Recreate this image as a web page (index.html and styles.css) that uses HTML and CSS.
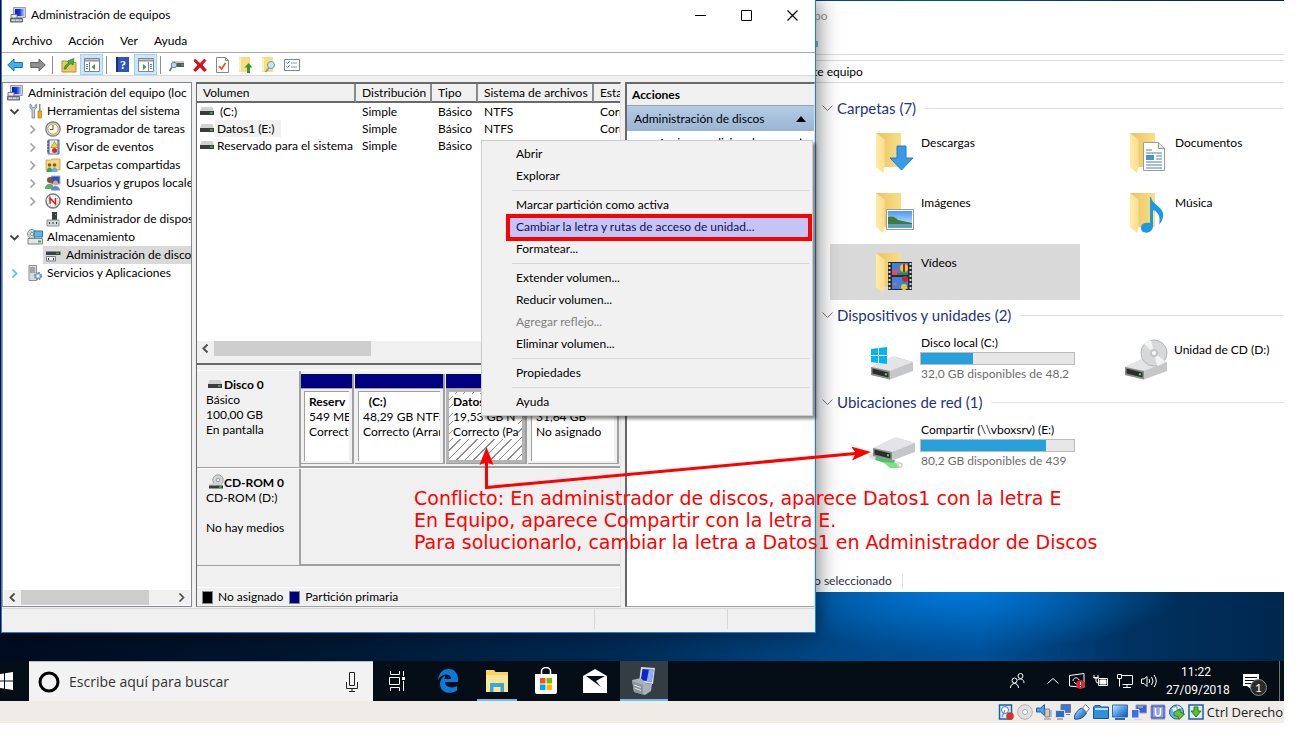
FILE: index.html
```html
<!DOCTYPE html>
<html lang="es">
<head>
<meta charset="utf-8">
<title>Administración de equipos</title>
<link rel="stylesheet" href="styles.css">
</head>
<body>
<svg class="defs" aria-hidden="true">
  <defs>
    <linearGradient id="g-fold" x1="0" x2="1" y1="0" y2="0"><stop offset="0" stop-color="#e9c463"/><stop offset="1" stop-color="#fadd85"/></linearGradient>
    <linearGradient id="g-flap" x1="0" x2="1" y1="0" y2="0"><stop offset="0" stop-color="#ffeaa8"/><stop offset="1" stop-color="#fddf8c"/></linearGradient>
    <linearGradient id="g-blue" x1="0" x2="1" y1="0" y2="1"><stop offset="0" stop-color="#cfe9ff"/><stop offset="0.5" stop-color="#4f9be6"/><stop offset="1" stop-color="#0d4fae"/></linearGradient>
    <linearGradient id="g-sky" x1="0" x2="0" y1="0" y2="1"><stop offset="0" stop-color="#4a9bf0"/><stop offset="1" stop-color="#d8eefc"/></linearGradient>
    <linearGradient id="g-screen" x1="0" x2="1" y1="0" y2="0"><stop offset="0" stop-color="#0b1fc0"/><stop offset="0.5" stop-color="#1b35d6"/><stop offset="1" stop-color="#a9c4f6"/></linearGradient>
    <symbol id="i-pc" viewBox="0 0 16 16"><path d="M3.500.500h12v10h-12z" fill="#cfd3d8" stroke="#9a9fa5"/><path d="M5 2h9v7H5z" fill="url(#g-screen)"/><path d="M1 7.500h6V11H1z" fill="#e6e9ec" stroke="#767c82"/><path d="M.5 11.500h12v3.500H.5z" fill="#9aa3ad" stroke="#5d656d"/><path d="M2 13.200h3M6 13.200h3M10 13.200h1.500" stroke="#eef1f4"/></symbol>
    <symbol id="i-tools" viewBox="0 0 16 16"><path d="M3 1v4l2 1.500V15h2.500V6.500L9.500 5V1L8 2.200v2.300H4.800V2.200z" fill="#c7cbd0" stroke="#81868c" stroke-width=".8"/><path d="M12 1h1.500v7H12z" fill="#8b9096"/><path d="M11 8h3.500v7H11z" fill="#f2a81d" stroke="#bd7a05" stroke-width=".7"/></symbol>
    <symbol id="i-clock" viewBox="0 0 16 16"><circle cx="8" cy="8" r="7.200" fill="#dcdcdc" stroke="#767676" stroke-width="1.200"/><circle cx="8" cy="8" r="5.200" fill="#fff8e0" stroke="#b7a06c"/><path d="M8 4v4.500h-3" stroke="#555" fill="none"/></symbol>
    <symbol id="i-event" viewBox="0 0 16 16"><path d="M3 1h11v14H3z" fill="#8fa6d6" stroke="#51689e"/><path d="M5 1.500h7v13H5z" fill="#e8eef8"/><path d="M9.500 2.500l3.500 6H6z" fill="#ffcf2e" stroke="#b88900" stroke-width=".7"/><circle cx="9.500" cy="11.500" r="2.500" fill="#cf2a27"/><path d="M2 3h2M2 6h2M2 9h2M2 12h2" stroke="#444"/></symbol>
    <symbol id="i-shared" viewBox="0 0 16 16"><path d="M1 3h5l1-1h8v11H1z" fill="#f5d77c" stroke="#c69f3c" stroke-width=".8"/><circle cx="4.500" cy="8" r="1.800" fill="#8b5a2b"/><circle cx="9.500" cy="8" r="1.800" fill="#8b5a2b"/><path d="M1.500 15c0-6 6-6 6 0z" fill="#35a06d"/><path d="M6.500 15c0-6 6-6 6 0z" fill="#58b7de"/></symbol>
    <symbol id="i-users" viewBox="0 0 16 16"><path d="M6 1h9v8H6z" fill="#2b50cf" stroke="#aeb5c2"/><circle cx="5" cy="5" r="3" fill="#7a573a"/><path d="M0 14c0-7 9-7 9 0z" fill="#68a96a"/><circle cx="10.500" cy="8" r="2.500" fill="#d5a982"/><path d="M6 15.500c0-6 9-6 9 0z" fill="#5a8bd0"/></symbol>
    <symbol id="i-perf" viewBox="0 0 16 16"><circle cx="8" cy="8" r="7" fill="#fff" stroke="#7b7b7b" stroke-width="1.500"/><circle cx="8" cy="8" r="5" fill="none" stroke="#999" stroke-dasharray="1 1.500"/><path d="M5 11V5l5.500 6V5" stroke="#d2201f" stroke-width="1.500" fill="none"/></symbol>
    <symbol id="i-dev" viewBox="0 0 16 16"><path d="M7 1h5v8H7z" fill="#3b3f43"/><path d="M10 3h1v1h-1z" fill="#3ae04d"/><path d="M2 9h12v6H2z" fill="#d5d8db" stroke="#8b9095"/><path d="M4.500 11v2M8 11v2M11.500 11v2" stroke="#333"/></symbol>
    <symbol id="i-storage" viewBox="0 0 16 16"><circle cx="5" cy="5" r="4.500" fill="#d0d3d5" stroke="#8f9496"/><circle cx="5" cy="5" r="1.500" fill="#fff" stroke="#888"/><path d="M7 2h8.500v6H7z" fill="#59b4e8" stroke="#39719a"/><path d="M1 9.500h14.500V15H1z" fill="#e3e5e7" stroke="#7d8286"/><path d="M11 11.500h3v2h-3z" fill="#32b53a"/></symbol>
    <symbol id="i-disk" viewBox="0 0 16 16"><path d="M1 2h14.500v2.500H1z" fill="#dcdedf"/><path d="M1 4.500h14.500V8H1z" fill="#3d4145"/><path d="M11 6.300h3" stroke="#38dc45"/><path d="M1.500 9.500h9V14h-9z" fill="#eceeef" stroke="#777c80"/><path d="M3.500 11v2M8.500 11v2" stroke="#333"/></symbol>
    <symbol id="i-serv" viewBox="0 0 16 16"><path d="M2 .5h7.500v15H2z" fill="#d8dbdd" stroke="#8d9296"/><path d="M3 3h5M3 5h5M3 7h5" stroke="#6b7074"/><circle cx="11" cy="11" r="3.200" fill="#dce9f3" stroke="#6f93b0" stroke-width="2" stroke-dasharray="1.600 .9"/><circle cx="11" cy="11" r="2.800" fill="#b5cfe2" stroke="#6f93b0"/><circle cx="11" cy="11" r="1" fill="#fff"/></symbol>
    <symbol id="i-vol" viewBox="0 0 14 9"><path d="M1.500 0h11l1.500 4H0z" fill="#cfd1d3"/><path d="M0 4h14v4H0z" fill="#3a3d40"/><path d="M10 6h2.500" stroke="#37e044" stroke-width="1.400"/></symbol>
    <symbol id="i-cdrom" viewBox="0 0 16 16"><circle cx="10" cy="6" r="5.200" fill="#d4d7d8" stroke="#9a9ea0"/><circle cx="10" cy="6" r="1.800" fill="#f7f7f7" stroke="#999"/><path d="M2 9.500h12l1 2H1z" fill="#cfd1d3"/><path d="M1 11.500h14v3H1z" fill="#3a3d40"/><path d="M11 13h2.500" stroke="#37e044" stroke-width="1.300"/></symbol>
    <symbol id="i-exp" viewBox="0 0 9 9"><path d="M2.500.5l4 4-4 4" fill="none" stroke="currentColor" stroke-width="1.700"/></symbol>
    <symbol id="i-col" viewBox="0 0 9 9"><path d="M.5 2.500l4 4 4-4" fill="none" stroke="currentColor" stroke-width="1.800"/></symbol>
    <symbol id="i-left" viewBox="0 0 9 9"><path d="M6.500.5l-4 4 4 4" fill="none" stroke="currentColor" stroke-width="2"/></symbol>
    <symbol id="i-folder" viewBox="0 0 44 44"><path d="M5 2h25v34H5z" fill="url(#g-fold)"/><path d="M5 2l8.500 6.500V36L12 42l-7-6z" fill="url(#g-flap)"/></symbol>
    <symbol id="i-hdd" viewBox="0 0 44 24"><path d="M1 11L22 1q2-1 4 0l17 5v9L20 23.500 1 19z" fill="#c5c6c8"/><path d="M1 11L22 1q2-1 4 0l17 5-23 9z" fill="#e4e4e6"/><path d="M1 11l19 4v8.500L1 19z" fill="#8c8d90"/><path d="M2.500 12.500l16 4v5l-16-4z" fill="#2c2d2f"/><path d="M15 18l2 .5" stroke="#3be84a" stroke-width="2"/></symbol>
  </defs>
</svg>

<main class="vm">
  <div class="desktop">

    <section class="explorer" aria-label="Este equipo">
      <div class="ex-title">po</div>
      <div class="ex-ribbon"><i></i></div>
      <div class="ex-address">te equipo</div>
      <div class="ex-body">
        <h2><svg width="11" height="7" viewBox="0 0 11 7"><path d="M.5.500l5 5 5-5" fill="none" stroke="#777"/></svg>Carpetas (7)</h2>
        <div class="ex-grid">
          <a href="#" class="tile"><svg width="44" height="44" viewBox="0 0 44 44"><use href="#i-folder"/><path d="M26 15h9v12h7L30.500 39 19 27h7z" fill="#3a9ae8" stroke="#1f7fd0"/></svg><span>Descargas</span></a>
          <a href="#" class="tile"><svg width="44" height="44" viewBox="0 0 44 44"><use href="#i-folder"/><path d="M18.500 11.500h15l6 6v22h-21z" fill="#fff" stroke="#9a9a9a"/><path d="M33.500 11.500v6h6" fill="#e4e4e4" stroke="#9a9a9a"/><path d="M21 19h6M21 22h16M31 25h6M31 28h6M21 31h16M21 34h16M21 37h16" stroke="#4a7fb5"/><path d="M21 24h8v5h-8z" fill="#4b93cf"/></svg><span>Documentos</span></a>
          <a href="#" class="tile"><svg width="44" height="44" viewBox="0 0 44 44"><use href="#i-folder"/><path d="M15.500 18.500h27v20h-27z" fill="#fff" stroke="#999"/><path d="M17 20h24v17H17z" fill="url(#g-sky)"/><path d="M17 26q6-2 10 3l14 3v2H17z" fill="#3f7a3c"/><path d="M17 33h24v4H17z" fill="#5f9fc2"/></svg><span>Imágenes</span></a>
          <a href="#" class="tile"><svg width="44" height="44" viewBox="0 0 44 44"><use href="#i-folder"/><path d="M26 6c1 8 14 10 12 20-1 5-3 6-4 8 2-9-1-13-6-15v16c0 8-12 9-12 2 0-5 5-6 9-5V6z" fill="#1d9ade"/></svg><span>Música</span></a>
          <a href="#" class="tile selected"><svg width="44" height="44" viewBox="0 0 44 44"><use href="#i-folder"/><path d="M17 11h24v28H17z" fill="#2b2b2b"/><path d="M18.500 12v27M39.500 12v27" stroke="#d6d6d6" stroke-width="2" stroke-dasharray="2 2"/><path d="M21 12h16v12H21zM21 26h16v12H21z" fill="#3f7fe0"/><path d="M21 20l6-3v7h-6z" fill="#d64f6c"/><path d="M26 22h11v2H26z" fill="#2f8b36"/><circle cx="33" cy="17" r="4" fill="#f4c61a"/><path d="M33 13v8" stroke="#a4281d" stroke-width="2"/><circle cx="34" cy="28" r="3" fill="#b9302c"/><circle cx="33" cy="36" r="3" fill="#f4c61a"/><circle cx="24" cy="33" r="1.500" fill="#e8664c"/></svg><span>Vídeos</span></a>
        </div>
        <h2><svg width="11" height="7" viewBox="0 0 11 7"><path d="M.5.500l5 5 5-5" fill="none" stroke="#777"/></svg>Dispositivos y unidades (2)</h2>
        <div class="ex-grid">
          <a href="#" class="tile drive"><svg width="44" height="44" viewBox="0 0 44 44"><use href="#i-hdd" y="18" width="44" height="24"/><path d="M1 11l7-1v7H1zM9 10l8-1v8H9zM1 18h7v7l-7-1zM9 18h8v8l-8-1z" fill="#00b6f0"/></svg><div class="info">Disco local (C:)<div class="usage" role="meter" aria-label="Espacio usado" aria-valuenow="34"><i style="width:34%"></i></div><small>32,0 GB disponibles de 48,2</small></div></a>
          <a href="#" class="tile cd"><svg width="44" height="44" viewBox="0 0 44 44"><use href="#i-hdd" y="18" width="44" height="24"/><circle cx="30" cy="15" r="13" fill="#d6d8d9" stroke="#b4b6b7"/><path d="M30 15L20 6a13 13 0 0 1 7-4zM30 15l11 8a13 13 0 0 1-8 5z" fill="#f2f4f4"/><circle cx="30" cy="15" r="4" fill="#c2c4c5"/><circle cx="30" cy="15" r="2" fill="#fff"/></svg><span>Unidad de CD (D:)</span></a>
        </div>
        <h2><svg width="11" height="7" viewBox="0 0 11 7"><path d="M.5.500l5 5 5-5" fill="none" stroke="#777"/></svg>Ubicaciones de red (1)</h2>
        <div class="ex-grid">
          <a href="#" class="tile drive"><svg width="44" height="44" viewBox="0 0 44 44"><path d="M2 31l28 9" stroke="#dfe3e3" stroke-width="6" stroke-linecap="round"/><circle cx="30" cy="40" r="2" fill="#fff" stroke="#c3c8c8"/><path d="M6 32l18 6" stroke="#4cc065" stroke-width="6"/><path d="M13 37l13 1 3 5h-9z" fill="#7fdf8c"/><use href="#i-hdd" x="2" y="12" width="44" height="24"/></svg><div class="info">Compartir (\\vboxsrv) (E:)<div class="usage" role="meter" aria-label="Espacio usado" aria-valuenow="82"><i style="width:82%"></i></div><small>80,2 GB disponibles de 439</small></div></a>
        </div>
      </div>
      <div class="ex-status"><span>o seleccionado</span></div>
    </section>

    <section class="mmc" aria-label="Administración de equipos">
      <header class="titlebar">
        <svg width="16" height="16"><use href="#i-pc"/></svg>
        <h1>Administración de equipos</h1>
        <button aria-label="Minimizar"><svg width="11" height="11"><path d="M0 5.500h11" stroke="#000"/></svg></button>
        <button aria-label="Maximizar"><svg width="11" height="11"><path d="M.5.500h10v10H.5z" fill="none" stroke="#000"/></svg></button>
        <button aria-label="Cerrar"><svg width="11" height="11"><path d="M.5.500l10 10M10.500.500l-10 10" stroke="#000" stroke-width="1.200"/></svg></button>
      </header>
      <nav class="menubar"><button>Archivo</button><button>Acción</button><button>Ver</button><button>Ayuda</button></nav>
      <div class="toolbar">
        <button aria-label="Atrás"><svg width="16" height="16"><path d="M.7 8L7 2v3.500h8.300v5H7V14z" fill="#3fb0ea" stroke="#1d6fa8"/></svg></button>
        <button aria-label="Adelante"><svg width="16" height="16"><path d="M15.300 8L9 2v3.500H.7v5H9V14z" fill="#8e9091" stroke="#626465"/></svg></button>
        <i class="tsep"></i>
        <button aria-label="Subir un nivel"><svg width="16" height="16"><path d="M1 4h5l1 1.500h8V15H1z" fill="#edc763" stroke="#b88f35"/><path d="M3 12c1-4 3-5 5-6L6.500 4 13 1.500 12 8l-2-1.500C8 8 6 9 5 12z" fill="#3fb23c" stroke="#1c7d22" stroke-width=".7"/></svg></button>
        <button class="on" aria-label="Mostrar árbol"><svg width="16" height="14"><path d="M.5.500h15v13H.5z" fill="#fff" stroke="#7d848c"/><path d="M1 2.500h14" stroke="#8f979f" stroke-width="2"/><path d="M5.500 4v9" stroke="#7d848c"/><path d="M2 6.500h2M2 8.500h2M2 10.500h2" stroke="#4b7ec1"/><path d="M11 6v6L7.500 9z" fill="#3aa535"/></svg></button>
        <i class="tsep"></i>
        <button aria-label="Ayuda"><svg width="13" height="15"><path d="M0 0h13v15H0z" fill="#2f55b8"/><path d="M0 0h2v15H0z" fill="#1a2f80"/><text x="4" y="12" fill="#fff" class="help">?</text></svg></button>
        <button class="on" aria-label="Mostrar panel de acciones"><svg width="16" height="14"><path d="M.5.500h15v13H.5z" fill="#fff" stroke="#7d848c"/><path d="M1 2.500h14" stroke="#8f979f" stroke-width="2"/><path d="M10.500 4v9" stroke="#7d848c"/><path d="M12 6.500h2M12 8.500h2M12 10.500h2" stroke="#4b7ec1"/><path d="M5 6v6l3.500-3z" fill="#3aa535"/></svg></button>
        <i class="tsep"></i>
        <button aria-label="Examinar disco"><svg width="16" height="16"><path d="M3 4h12v2H3z" fill="#c9cbcd"/><path d="M4 6h11v4H4z" fill="#55595d"/><path d="M12 8h2.500" stroke="#38dc45"/><circle cx="5" cy="8" r="2.800" fill="#b9d8ec" stroke="#70808c"/><path d="M3 10l-2.500 4" stroke="#70808c" stroke-width="1.800"/></svg></button>
        <button aria-label="Eliminar"><svg width="14" height="14"><path d="M2 1l5 4.500L11.500 1 13 2.500 9 7l4.500 5-2.500 1.500L7 9l-4.500 4.500L.5 12 5 7 1 3z" fill="#d80f16" stroke="#d80f16" stroke-width=".8"/></svg></button>
        <button aria-label="Propiedades"><svg width="13" height="16"><path d="M.5.500h9l3 3v12H.5z" fill="#fff" stroke="#828790"/><path d="M9.500.500v3h3" fill="none" stroke="#828790"/><path d="M3 9l2.500 3L9.500 6" stroke="#e4502a" stroke-width="1.700" fill="none"/></svg></button>
        <button aria-label="Carpeta arriba"><svg width="15" height="16"><path d="M1 0h11v15H1z" fill="#f9dd85"/><path d="M1 1h2v14l-2-1z" fill="#fff0b5"/><path d="M10.500 6l4 4.500H12V16H9v-5.500H6.500z" fill="#2c9e2c"/></svg></button>
        <button aria-label="Buscar"><svg width="15" height="16"><path d="M1 0h11v15H1z" fill="#f9dd85"/><path d="M1 1h2v14l-2-1z" fill="#fff0b5"/><circle cx="10" cy="8" r="3.500" fill="#c4e5f6" stroke="#7f98a6"/><path d="M8 11l-3.500 4" stroke="#7f98a6" stroke-width="1.800"/></svg></button>
        <button aria-label="Lista"><svg width="16" height="12"><path d="M.5.500h15v11H.5z" fill="#fff" stroke="#7d848c"/><path d="M2.500 3.500l1 1 2-2M2.500 7.500l1 1 2-2" fill="none" stroke="#3f7bc8"/><path d="M7 4h6M7 8h6" stroke="#8f979f"/></svg></button>
      </div>

      <div class="panes">
        <div class="pane tree-pane">
          <ul class="tree">
            <li class="l0"><svg class="ti"><use href="#i-pc"/></svg>Administración del equipo (loc</li>
            <li class="l1"><svg class="tw dark"><use href="#i-col"/></svg><svg class="ti"><use href="#i-tools"/></svg>Herramientas del sistema</li>
            <li class="l2"><svg class="tw"><use href="#i-exp"/></svg><svg class="ti"><use href="#i-clock"/></svg>Programador de tareas</li>
            <li class="l2"><svg class="tw"><use href="#i-exp"/></svg><svg class="ti"><use href="#i-event"/></svg>Visor de eventos</li>
            <li class="l2"><svg class="tw"><use href="#i-exp"/></svg><svg class="ti"><use href="#i-shared"/></svg>Carpetas compartidas</li>
            <li class="l2"><svg class="tw"><use href="#i-exp"/></svg><svg class="ti"><use href="#i-users"/></svg>Usuarios y grupos locales</li>
            <li class="l2"><svg class="tw"><use href="#i-exp"/></svg><svg class="ti"><use href="#i-perf"/></svg>Rendimiento</li>
            <li class="l2"><svg class="tw"></svg><svg class="ti"><use href="#i-dev"/></svg>Administrador de dispositivos</li>
            <li class="l1"><svg class="tw dark"><use href="#i-col"/></svg><svg class="ti"><use href="#i-storage"/></svg>Almacenamiento</li>
            <li class="l2 cur"><svg class="tw"></svg><svg class="ti"><use href="#i-disk"/></svg>Administración de discos</li>
            <li class="l1"><svg class="tw cyan"><use href="#i-exp"/></svg><svg class="ti"><use href="#i-serv"/></svg>Servicios y Aplicaciones</li>
          </ul>
          <div class="hscroll"><button aria-label="Izquierda"><svg width="9" height="9"><use href="#i-left"/></svg></button><i class="thumb tree-thumb"></i><span class="spacer"></span><button aria-label="Derecha"><svg width="9" height="9"><use href="#i-exp"/></svg></button></div>
        </div>

        <div class="pane disk-pane">
          <div class="vol-list">
            <table>
              <colgroup><col class="c1"><col class="c2"><col class="c3"><col class="c4"><col class="c5"></colgroup>
              <thead><tr><th>Volumen</th><th>Distribución</th><th>Tipo</th><th>Sistema de archivos</th><th>Estado</th></tr></thead>
              <tbody>
                <tr><td><svg class="vi"><use href="#i-vol"/></svg><span>&nbsp;(C:)</span></td><td>Simple</td><td>Básico</td><td>NTFS</td><td>Correcto</td></tr>
                <tr class="sel"><td><svg class="vi"><use href="#i-vol"/></svg><span>Datos1 (E:)</span></td><td>Simple</td><td>Básico</td><td>NTFS</td><td>Correcto</td></tr>
                <tr><td><svg class="vi"><use href="#i-vol"/></svg><span>Reservado para el sistema</span></td><td>Simple</td><td>Básico</td><td></td><td></td></tr>
              </tbody>
            </table>
          </div>
          <div class="hscroll"><button aria-label="Izquierda"><svg width="9" height="9"><use href="#i-left"/></svg></button><i class="thumb list-thumb"></i></div>
          <div class="disk-map">
            <div class="disk">
              <div class="disk-label"><b><svg class="vi"><use href="#i-vol"/></svg>Disco 0</b><span>Básico</span><span>100,00 GB</span><span>En pantalla</span></div>
              <div class="parts">
                <div class="part p1"><i></i><div class="pbox"><p><b>Reserv</b><br>549 MB<br>Correcto</p></div></div>
                <div class="part p2"><i></i><div class="pbox"><p><b>&nbsp; (C:)</b><br>48,29 GB NTFS<br>Correcto (Arranque)</p></div></div>
                <div class="part p3"><i></i><div class="pbox"><p><b>Datos1</b><br>19,53 GB NTFS<br>Correcto (Partición)</p></div></div>
                <div class="part p4 free"><i></i><div class="pbox"><p><br>31,64 GB<br>No asignado</p></div></div>
              </div>
            </div>
            <div class="disk">
              <div class="disk-label"><b><svg class="ti"><use href="#i-cdrom"/></svg>CD-ROM 0</b><span>CD-ROM (D:)</span><span>&nbsp;</span><span>No hay medios</span></div>
              <div class="parts"></div>
            </div>
          </div>
          <div class="legend"><i class="k"></i>No asignado<i class="n"></i>Partición primaria</div>
        </div>

        <div class="pane act-pane">
          <h3>Acciones</h3>
          <button class="act-head">Administración de discos<svg width="10" height="6"><path d="M0 6l5-6 5 6z"/></svg></button>
          <button class="act-more">Acciones adicionales<svg width="6" height="10"><path d="M0 0l5 5-5 5z"/></svg></button>
        </div>
      </div>
      <footer class="mmc-status"><i></i><i></i></footer>
    </section>

    <div class="ctx" role="menu">
      <button role="menuitem">Abrir</button>
      <button role="menuitem">Explorar</button>
      <hr>
      <button role="menuitem">Marcar partición como activa</button>
      <button role="menuitem" class="hot">Cambiar la letra y rutas de acceso de unidad...</button>
      <button role="menuitem">Formatear...</button>
      <hr>
      <button role="menuitem">Extender volumen...</button>
      <button role="menuitem">Reducir volumen...</button>
      <button role="menuitem" disabled>Agregar reflejo...</button>
      <button role="menuitem">Eliminar volumen...</button>
      <hr>
      <button role="menuitem">Propiedades</button>
      <hr>
      <button role="menuitem">Ayuda</button>
    </div>

    <svg class="arrows" width="400" height="50" viewBox="0 0 400 50"><path d="M11.500 12v28.500L386 6" fill="none" stroke="#f00" stroke-width="3"/><path d="M11.500 0l7 18-7-3-7 3z" fill="#f00"/><path d="M396 5l-19 8.500 4-7.500-5-6.500z" fill="#f00"/></svg>
    <p class="note">Conflicto: En administrador de discos, aparece Datos1 con la letra E<br>En Equipo, aparece Compartir con la letra E.<br>Para solucionarlo, cambiar la letra a Datos1 en Administrador de Discos</p>
  </div>

  <nav class="taskbar">
    <button class="start" aria-label="Inicio"><svg width="14" height="18"><path d="M0 2l4-.5v7H0zM5 1.300L13 0v8.500H5zM0 9.500h4v7L0 16zM5 9.500h8V18l-8-1.300z" fill="#fff"/></svg></button>
    <label class="search"><svg width="22" height="22"><circle cx="11" cy="11" r="9" fill="none" stroke="#000" stroke-width="3"/></svg><input type="text" placeholder="Escribe aquí para buscar" aria-label="Escribe aquí para buscar"><svg width="12" height="20" viewBox="0 0 12 20"><path d="M3.500.500h5v13h-5z" fill="none" stroke="#222"/><path d="M.5 10v6.500h11V10M6 16.500v3M3 19.500h6" fill="none" stroke="#222"/></svg></label>
    <div class="apps">
      <button class="tv" aria-label="Vista de tareas"><svg width="17" height="20"><path d="M1.500 0v3.500h9V0M.5 6.500h10v7H.5zM1.500 20v-3.500h9V20M14.500 0v5M14.500 10v10" fill="none" stroke="#fff"/><path d="M13 6h3v3h-3z" fill="#fff"/></svg></button>
      <button aria-label="Edge"><svg width="20" height="24" viewBox="0 0 20 24"><path d="M0 11C1 3 6 0 10.500 0 17 0 20 5 20 10v3H7c0 5 7 7 12 4v4.500C10 27 2 22 2 15c0-4 2-7 6-9-1 1-1.500 2.500-1.500 4H13c0-6-9-6-13 1z" fill="#0b7bdb"/></svg></button>
      <button class="run" aria-label="Explorador"><svg width="22" height="22" viewBox="0 0 22 22"><path d="M0 0h8l1.500 2H22v20H0z" fill="#fcd462"/><path d="M0 5h22v17H0z" fill="#ffe694"/><path d="M4 22v-9h14v9h-3.500v-5h-7v5z" fill="#33a9e0"/></svg></button>
      <button aria-label="Tienda"><svg width="24" height="28" viewBox="0 0 24 28"><path d="M7.500 8V4a4.500 3.500 0 0 1 9 0v4" fill="none" stroke="#fff" stroke-width="1.500"/><path d="M1 7h22v18q0 2-2 2H3q-2 0-2-2z" fill="#fff"/><path d="M6 11h5.500v5.500H6z" fill="#f25022"/><path d="M12.500 11H18v5.500h-5.500z" fill="#7fba00"/><path d="M6 17.500h5.500V23H6z" fill="#00a4ef"/><path d="M12.500 17.500H18V23h-5.500z" fill="#ffb900"/></svg></button>
      <button aria-label="Correo"><svg width="24" height="24" viewBox="0 0 24 24"><path d="M12 0l12 7v17H0V7z" fill="#fff"/><path d="M3 7h19l-9 5 5 6z" fill="#050d16"/></svg></button>
      <button class="run active" aria-label="Administración de equipos"><svg width="24" height="30" viewBox="0 0 24 30"><path d="M9 1l14 1-2 16-14-2z" fill="#d5dae2"/><path d="M10.500 3l11 .8-1.800 12-11-1.500z" fill="#1226c8"/><path d="M17 3.500l4.500.3-1.800 12-5-.7z" fill="#8fb0f5"/><path d="M0 14l9-2 4 5 7 1-1 7-6 4-11-3z" fill="#a9b1ba"/><path d="M0 15l11 4v9.500L2 26z" fill="#8b949e"/><path d="M2 19l7 2.500M2.500 22l6.500 2.500" stroke="#dfe4ea"/></svg></button>
    </div>
    <div class="tray">
      <svg class="people" width="15" height="16"><circle cx="10.500" cy="3" r="2.500"/><circle cx="4.500" cy="7.500" r="2.500"/><path d="M.5 15c0-6 8-6 8 0M7.500 7c3-2 6.500-1 6.500 3"/></svg>
      <svg class="up" width="12" height="8"><path d="M.5 6.500l5.500-5 5.500 5"/></svg>
      <svg width="16" height="16"><path d="M.5 2.500L15 .5v14L.5 13z"/><path d="M4 8c0-4 5-4 6-1M11 8c0 3-4 4-6 1"/><circle cx="11.500" cy="11.500" r="4" fill="#e1232b" stroke="#e1232b"/><path d="M11.500 9v3M11.500 13v1"/></svg>
      <svg width="16" height="16"><path d="M5.500 5.500h9v7h-9z"/><path d="M7 7h6v4H7z" fill="#fff"/><path d="M1 2v3h4V2M3 5v3q0 2 2 2M.5 4.500h5"/></svg>
      <svg width="16" height="16"><path d="M5 2.500h10.500v9H5.500M10 12v2.500M6 14.500h8M.5 1.500h4v4h-4zM2.500 5.500v8"/></svg>
      <svg width="17" height="16"><path d="M.5 6v4.500h2.500l3 3v-10L3 6zM8 6q1.500 2 0 4M10.500 4q3 4 0 8M13 2q4.500 6 0 12"/></svg>
      <time>11:22<br>27/09/2018</time>
      <button class="notif" aria-label="Notificaciones"><svg width="17" height="15"><path d="M0 0h16v12H8v3l-4-3H0z" fill="#fff" stroke="none"/><path d="M2 3.500h12M2 6.500h12M2 9.500h8" stroke="#050d16"/></svg><span>1</span></button>
      <i class="peek"></i>
    </div>
  </nav>

  <footer class="hostbar">
    <svg><path d="M1.500 1h12v14h-12z" fill="#d9ecff" stroke="#1c5fae" stroke-width="1.500"/><circle cx="7" cy="6" r="3.500" fill="#fff" stroke="#3a7cc8"/><path d="M7 6l-3 7" stroke="#777"/><circle cx="12" cy="12" r="3.800" fill="#d93025"/></svg>
    <svg><circle cx="8" cy="8" r="7.300" fill="#e0e0e0" stroke="#b3b3b3"/><circle cx="8" cy="8" r="2.500" fill="#fff" stroke="#aaa"/></svg>
    <svg><path d="M.5 4h4l4-3.500v11L4.500 8h-4z" fill="#4f9be6" stroke="#1c5fae"/><path d="M9 5h4.500v8H9zM8 15h7M15 6v7" fill="#ccc" stroke="#888"/></svg>
    <svg><path d="M6 .5h9.500v8H6z" fill="#3a78dc" stroke="#777"/><path d="M.5 6.500h9v7h-9z" fill="#2f6bd4" stroke="#ddd"/><path d="M2 15h6M11 10.500h4" stroke="#777"/></svg>
    <svg><path d="M.5 15c-1-4 3-9 7-11l5 5c-2 4-7 7-12 6z" fill="url(#g-blue)" stroke="#1c4f96"/><path d="M8.500 4l3-3.500 4 4-3 3.500z" fill="#fff" stroke="#777"/></svg>
    <svg><path d="M.5 14.500V3L2 1.500h5L8 3h7.500v11.500z" fill="#2f8fe0" stroke="#14549c"/><path d="M2 5h13" stroke="#b9dcfa" stroke-width="2"/></svg>
    <svg><path d="M.5 1h15v12H.5z" fill="url(#g-blue)" stroke="#2b6cb8"/><path d="M3 15h10" stroke="#2b6cb8" stroke-width="2"/></svg>
    <svg><path d="M5 1h10.500v8H5z" fill="#3a62d8" stroke="#999"/><path d="M.5 5.500H8V14H.5z" fill="#3f6fe0" stroke="#eee"/><path d="M7 3h5M3 15.500h8" stroke="#c9d6ff"/></svg>
    <svg><path d="M1.500 1.500h13v13h-13z" fill="#6f83da" stroke="#3346a6" stroke-width="2" stroke-dasharray="1 1"/><path d="M3 3h10v10H3z" fill="#93a3ea"/><path d="M5.500 4v5q0 3 2.500 3t2.500-3V4" fill="none" stroke="#fff" stroke-width="1.500"/></svg>
    <svg><circle cx="7.500" cy="8" r="7" fill="#67b0ea" stroke="#1c5fae"/><path d="M3 4l4-1 1 3-3 3zM8 1l5 3-4 1z" fill="#e9f6ff"/><path d="M5 8l6-3v3l4.500 2-5.500 5.500-1-3-4-1z" fill="#6cc332" stroke="#2f7d12"/></svg>
    <svg><path d="M1 1h14v14H1z" fill="#dbe9fa" stroke="#1c5fae" stroke-width="1.500"/><path d="M6 3h4v4h3l-5 6-5-6h3z" fill="#55c423" stroke="#2c7d0a"/></svg>
    <span>Ctrl Derecho</span>
  </footer>
</main>
</body>
</html>
```
FILE: styles.css
```css
* { box-sizing: border-box; }
body {
  margin: 0;
  min-height: 100vh;
  padding: 0 19px 21px 0;
  display: flex;
  background: #fff;
  color: #000;
  font: 12px/18px Lato, "Open Sans", sans-serif;
}
h1, h2, h3, p, ul { margin: 0; padding: 0; font: inherit; }
button { border: 0; padding: 0; background: none; color: inherit; font: inherit; }
a { color: inherit; text-decoration: none; }
svg { flex: none; display: block; }
.defs { position: absolute; width: 0; height: 0; }
.vm { flex: 1; display: flex; flex-direction: column; min-width: 0; }

/* desktop */
.desktop {
  position: relative;
  flex: 1;
  min-height: 661px;
  overflow: hidden;
  background:
    radial-gradient(ellipse 220px 60px at 960px 592px, #0078d7, rgba(0, 110, 200, 0) 100%),
    linear-gradient(90deg, #000c20 0, #00162f 300px, #002a55 620px, #004684 820px, #005099 980px, #003261 1130px, #00274d 100%);
}

/* file explorer */
.explorer {
  position: absolute;
  top: 1px;
  right: 0;
  left: 812px;
  height: 591px;
  display: flex;
  flex-direction: column;
  background: #fff;
}
.ex-title { height: 30px; padding-left: 2px; line-height: 30px; color: #999; }
.ex-ribbon { height: 24px; padding: 10px 0 0 3px; border-bottom: 1px solid #dadada; }
.ex-ribbon i { display: block; width: 3px; height: 6px; background: #5fc3ef; }
.ex-address { height: 23px; margin-top: 5px; padding-left: 1px; border: solid #d9d9d9; border-width: 1px 0; line-height: 21px; }
.ex-body { flex: 1; padding: 10px 0 0 18px; }
.ex-body h2 {
  display: flex;
  align-items: center;
  gap: 4px;
  height: 30px;
  margin: 0 0 1px -8px;
  color: #1e3287;
  font-size: 15px;
}
.ex-body h2::after { content: ""; flex: 1; height: 1px; margin-left: 4px; background: #e2e2e2; }
.ex-grid { display: grid; grid-template-columns: 250px 250px; gap: 4px; }
.tile { display: flex; gap: 6px; height: 56px; padding: 7px 0 0 41px; color: #000; white-space: nowrap; }
.tile span { padding-top: 3px; }
.tile.selected { background: #d9d9d9; }
.tile.drive, .tile.cd { padding-left: 40px; }
.tile.drive { padding-top: 3px; }
.tile.drive svg { margin-top: 4px; overflow: visible; }
.info { margin-left: 1px; }
.tile small { display: block; color: #6d6d6d; font-size: 12px; }
.usage { width: 155px; height: 13px; margin-left: -1px; border: 1px solid #bcbcbc; background: #e6e6e6; }
.usage i { display: block; height: 100%; background: #26a0da; }
.ex-status { height: 22px; color: #1c3050; line-height: 22px; }
.ex-status span { display: inline-block; padding: 0 10px 0 2px; border-right: 1px solid #e0e0e0; line-height: 14px; }

/* management console */
.mmc {
  position: absolute;
  top: 0;
  left: 1px;
  width: 815px;
  height: 633px;
  display: flex;
  flex-direction: column;
  border: solid #1883d7;
  border-width: 0 1px 1px;
  background: #f0f0f0;
  box-shadow: 2px 0 20px rgba(0, 0, 0, .5);
}
.titlebar { display: flex; align-items: center; height: 30px; padding-left: 8px; background: #fff; }
.titlebar h1 { flex: 1; padding-left: 5px; }
.titlebar button { display: flex; justify-content: center; width: 46px; }
.menubar { display: flex; gap: 16px; height: 23px; padding-left: 10px; border-bottom: 1px solid #a9a9a9; background: #fff; line-height: 22px; }
.toolbar { display: flex; align-items: center; height: 23px; padding: 1px 0 0 1px; border-bottom: 1px solid #d9d9d9; background: #fff; }
.toolbar button { display: flex; align-items: center; justify-content: center; width: 23px; height: 21px; }
.toolbar button.on { border: 1px solid #99d1ff; background: #cce8ff; }
.tsep { width: 1px; height: 18px; margin: 0 4px 0 3px; background: #8e8e8e; }
.help { font: bold 12px "Liberation Serif", serif; }
.panes { flex: 1; display: flex; gap: 4px; min-height: 0; padding: 6px 0 0; }
.pane { display: flex; flex-direction: column; min-width: 0; overflow: hidden; background: #fff; }
.tree-pane { width: 190px; border: 1px solid #828790; border-left-color: #a0a0a0; }
.tree { flex: 1; list-style: none; padding-top: 1px; white-space: nowrap; overflow: hidden; }
.tree li { display: flex; align-items: center; height: 18px; }
.ti { width: 16px; height: 16px; margin-right: 5px; }
.tw { width: 9px; height: 9px; margin-right: 8px; color: #a6a6a6; }
.tw.dark { color: #404040; }
.tw.cyan { color: #4fc1f0; }
.l0 { padding-left: 4px; }
.l1 { padding-left: 7px; }
.l1 .ti { margin-right: 4px; }
.l2 { padding-left: 25px; }
.l2.cur { margin-left: 40px; padding-left: 2px; background: #d9d9d9; }
.l2.cur .tw { display: none; }
.hscroll { display: flex; align-items: center; height: 15px; margin: 0 1px; background: #f0f0f0; color: #505050; }
.hscroll button { display: flex; justify-content: center; width: 17px; }
.thumb { height: 15px; background: #cdcdcd; }
.tree-thumb { width: 128px; }
.list-thumb { width: 157px; }
.spacer { flex: 1; }
.tree-pane .hscroll { margin-bottom: 1px; }
.disk-pane .hscroll { margin: 0; }

.disk-pane { flex: 1; border: solid #696969; border-width: 2px 1px 1px 1px; border-right-color: #e3e3e3; border-bottom-color: #a0a0a0; }
.vol-list { flex: 1; overflow: hidden; }
table { width: 460px; border-collapse: separate; border-spacing: 0; table-layout: fixed; }
.c1 { width: 159px; } .c2 { width: 76px; } .c3 { width: 46px; } .c4 { width: 116px; } .c5 { width: 63px; }
th, td { padding: 0 0 0 6px; font-weight: normal; text-align: left; white-space: nowrap; overflow: hidden; }
th { height: 19px; border-right: 2px solid #8a8a8a; border-bottom: 2px solid #696969; background: #f0f0f0; line-height: 17px; }
td { height: 17px; line-height: 17px; vertical-align: top; }
td:first-child { padding-left: 3px; }
td .vi, td span { float: left; }
.vi { width: 14px; height: 9px; }
td .vi { margin: 4px 1px 0 0; }
td span { padding-left: 2px; height: 17px; }
.sel span { padding-right: 6px; background: #f0f0f0; }

.disk-map { height: 231px; padding-top: 14px; background: linear-gradient(#f0f0f0 7px, #696969 7px 9px, #f0f0f0 9px); }
.disk { display: flex; height: 98px; border-top: 1px solid #fff; border-bottom: 1px solid #a0a0a0; }
.disk-label { width: 104px; padding: 5px 0 0 9px; border: solid #a0a0a0; border-width: 0 2px 0 0; line-height: 15px; }
.disk-label b { display: flex; align-items: center; height: 16px; padding-left: 2px; }
.disk-label .vi { margin-right: 2px; }
.disk-label .ti { margin-right: 0; }
.disk-label span { display: block; }
.parts { flex: 1; display: flex; gap: 1px; padding: 3px 0 2px; min-width: 0; border-bottom: 1px solid #a0a0a0; }
.part { display: flex; flex-direction: column; border-right: 2px solid #a0a0a0; border-bottom: 1px solid #a0a0a0; }
.part > i { height: 15px; border-bottom: 1px solid #a0a0a0; background: #00007f; }
.free > i { background: #000; }
.p1 { width: 53px; } .p2 { width: 90px; } .p3 { width: 81px; } .p4 { width: 91px; }
.pbox { flex: 1; margin: 2px 3px; padding: 2px 0 2px 4px; border: solid #a0a0a0; border-width: 1px 0 0 1px; background: #fff; overflow: hidden; }
.pbox p { line-height: 15px; white-space: nowrap; overflow: hidden; background: #fff; }
.p3 .pbox { margin: 0; padding: 2px 4px; border: 3px solid #b4b4b4; background: repeating-linear-gradient(135deg, #fff 0 5px, #8e8e8e 5px 6px); }
.legend { display: flex; align-items: center; flex: none; height: 19px; padding-left: 5px; border-top: 1px solid #fff; background: #f0f0f0; }
.legend i { width: 11px; height: 13px; margin-right: 5px; border: 1px solid #888; }
.legend .k { background: #000; }
.legend .n { margin-left: 6px; background: #00007f; }

.act-pane { width: 190px; border: solid #696969; border-width: 2px 1px 1px 2px; border-right-color: #e3e3e3; border-bottom-color: #a0a0a0; }
.act-pane h3 { height: 22px; padding-left: 5px; border-bottom: 1px solid #a0a0a0; background: #f0f0f0; font-weight: bold; line-height: 22px; }
.act-head { display: flex; align-items: center; justify-content: space-between; height: 25px; padding: 0 8px 0 7px; background: linear-gradient(#b3cce6, #9ab4d2); }
.act-more { display: flex; align-items: center; justify-content: space-between; height: 24px; padding: 0 8px 0 31px; }
.mmc-status { display: flex; justify-content: flex-end; height: 24px; margin-top: 1px; padding-bottom: 3px; border-top: 1px solid #d7d7d7; }
.mmc-status i { width: 133px; border-left: 1px solid #d7d7d7; }
.mmc-status i:last-child { width: 88px; }

/* context menu */
.ctx {
  position: absolute;
  top: 140px;
  left: 481px;
  width: 332px;
  display: flex;
  flex-direction: column;
  padding: 2px 3px;
  border: 1px solid #ccc;
  background: #f1f1f1;
  box-shadow: 3px 3px 3px rgba(0, 0, 0, .45);
}
.ctx button { position: relative; height: 22px; padding-left: 31px; text-align: left; }
.ctx button:disabled { color: #808080; }
.ctx hr { width: 297px; height: 1px; margin: 3px 0 3px 27px; border: 0; background: #d5d5d5; }
.ctx .hot { z-index: 1; color: #14124c; }
.ctx .hot::before { content: ""; position: absolute; z-index: -1; inset: -2px -3px -3px 21px; border: 4px solid #f00; background: #c4c4f6; }

/* annotation */
.arrows { position: absolute; top: 447px; left: 475px; }
.note { position: absolute; top: 487px; left: 414px; color: #f00; font: 19px/22px "DejaVu Sans", sans-serif; white-space: nowrap; }

/* taskbar */
.taskbar { display: flex; height: 40px; background: #050d16; }
.start { width: 29px; }
.search { display: flex; align-items: center; width: 344px; padding: 0 15px 0 9px; border-top: 1px solid #b6bcc3; background: #f2f2f2; }
.search input { flex: 1; min-width: 0; padding: 0 0 0 9px; border: 0; outline: 0; background: none; font: 14px/20px "Open Sans", "Noto Sans", sans-serif; }
.search input::placeholder { color: #333; opacity: 1; }
.apps { flex: 1; display: flex; gap: 1px; }
.apps button { display: flex; align-items: center; justify-content: center; width: 48px; border: solid transparent; border-width: 2px 0; }
.apps .tv { width: 50px; padding-right: 2px; }
.apps .run { background: linear-gradient(#76b9ed, #76b9ed) 50% 100% / 40px 2px no-repeat border-box; }
.apps .active { background: linear-gradient(#76b9ed, #76b9ed) 50% 100% / 48px 2px no-repeat border-box, #343c44 border-box; }
.tray { display: flex; align-items: center; gap: 8px; }
.tray svg { fill: none; stroke: #fff; }
.people { margin-right: 14px; }
.tray .up { margin-right: 2px; }
.tray time { width: 60px; color: #fff; font-family: Roboto, sans-serif; text-align: center; }
.notif { position: relative; width: 28px; margin-left: 9px; }
.notif span { position: absolute; left: 7px; top: 5px; width: 17px; height: 17px; border: 1px solid #8a8a8a; border-radius: 50%; background: #2b2b2b; color: #fff; line-height: 15px; }
.peek { width: 1px; height: 40px; margin-right: 4px; background: #6d7278; }

/* host status bar */
.hostbar { display: flex; align-items: center; justify-content: flex-end; gap: 3px; height: 22px; padding-right: 1px; background: #efebe7; }
.hostbar svg { width: 16px; height: 16px; }
.hostbar span { color: #222; font: 13px/18px "Open Sans", "Noto Sans", sans-serif; }
```
